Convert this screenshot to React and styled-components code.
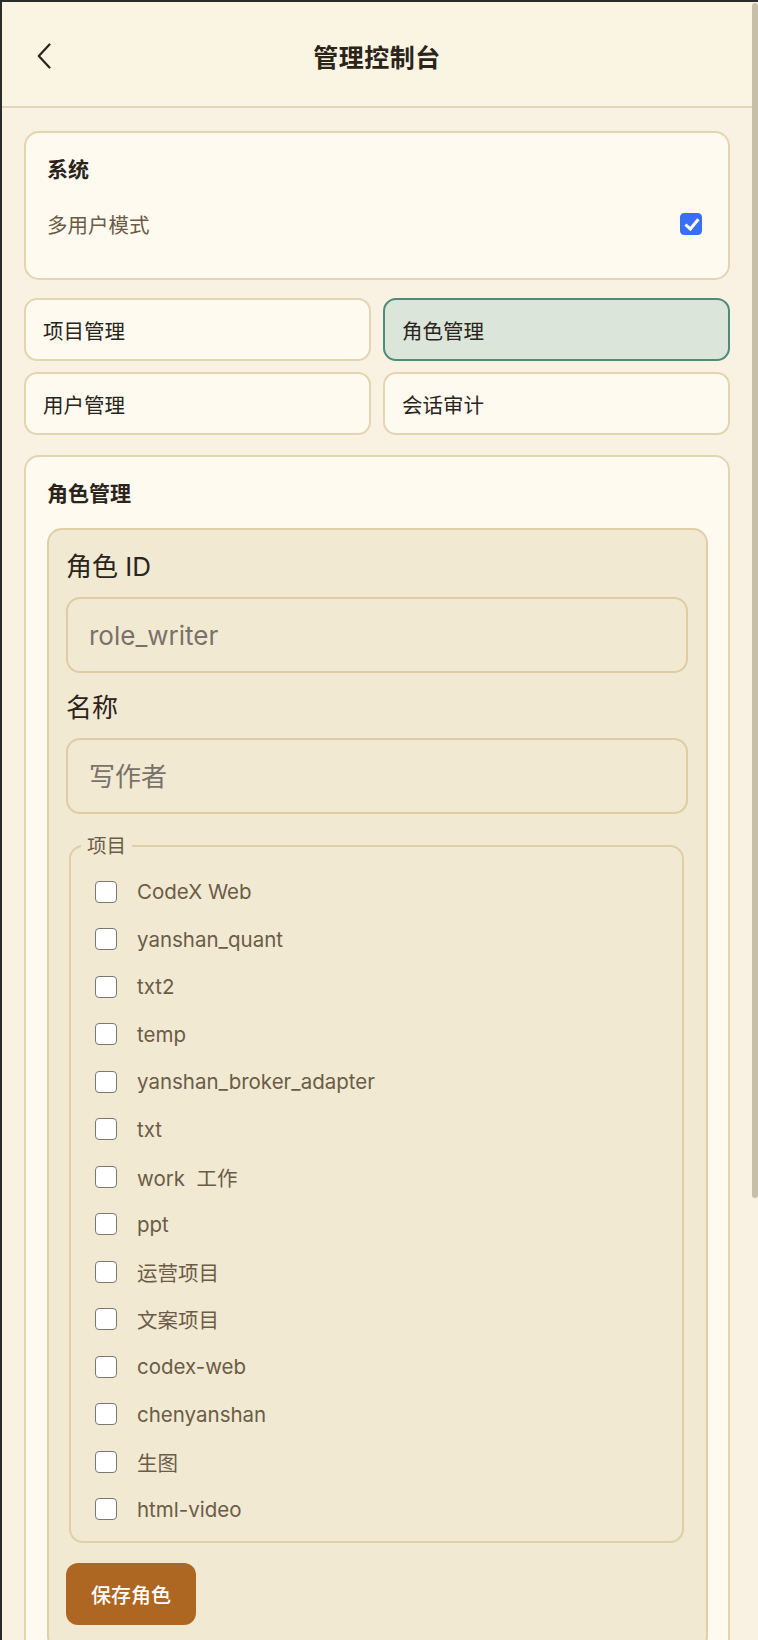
import React, { useState } from "react";
import styled, { createGlobalStyle } from "styled-components";

const projects = [
  "CodeX Web",
  "yanshan_quant",
  "txt2",
  "temp",
  "yanshan_broker_adapter",
  "txt",
  "work  工作",
  "ppt",
  "运营项目",
  "文案项目",
  "codex-web",
  "chenyanshan",
  "生图",
  "html-video",
];

const tabs = ["项目管理", "角色管理", "用户管理", "会话审计"];

const App = () => {
  const [multiUser, setMultiUser] = useState(true);
  const [active, setActive] = useState("角色管理");
  const [picked, setPicked] = useState({});

  const toggle = (name) => setPicked((p) => ({ ...p, [name]: !p[name] }));

  return (
    <Shell>
      <GlobalStyle />
      <Header>
        <Back aria-label="back">
          <svg width="14" height="26" viewBox="0 0 14 26" fill="none">
            <path
              d="M12.5 1.5 L1.8 13 L12.5 24.5"
              stroke="#2a241b"
              strokeWidth="2.2"
              strokeLinecap="round"
              strokeLinejoin="round"
            />
          </svg>
        </Back>
        <Title>管理控制台</Title>
      </Header>

      <Main>
        <Card>
          <CardTitle>系统</CardTitle>
          <SwitchRow>
            <span>多用户模式</span>
            <Check
              type="checkbox"
              $blue
              checked={multiUser}
              onChange={() => setMultiUser(!multiUser)}
            />
          </SwitchRow>
        </Card>

        <TabGrid>
          {tabs.map((t) => (
            <Tab key={t} $active={active === t} onClick={() => setActive(t)}>
              {t}
            </Tab>
          ))}
        </TabGrid>

        <Card $tall>
          <CardTitle>角色管理</CardTitle>
          <Panel>
            <Label>角色 ID</Label>
            <Input placeholder="role_writer" />
            <Label>名称</Label>
            <Input placeholder="写作者" />

            <Fieldset>
              <Legend>项目</Legend>
              {projects.map((p) => (
                <Item key={p}>
                  <Check
                    type="checkbox"
                    checked={!!picked[p]}
                    onChange={() => toggle(p)}
                  />
                  <ItemText>{p}</ItemText>
                </Item>
              ))}
            </Fieldset>

            <SaveButton>保存角色</SaveButton>
          </Panel>
        </Card>
      </Main>

      <ScrollThumb />
    </Shell>
  );
};

export default App;

const GlobalStyle = createGlobalStyle`
  * { box-sizing: border-box; }
  html, body {
    margin: 0;
    background: #f9f2e2;
  }
  body {
    font-family: Inter, "Noto Sans CJK SC", sans-serif;
    color: #2a241b;
    overflow: hidden;
  }
`;

const Shell = styled.div`
  min-height: 100vh;
  border-top: 2px solid #2c2b29;
  border-left: 2px solid #2c2b29;
  padding-right: 6px;
  background: #f9f2e2;
`;

const Header = styled.header`
  height: 106px;
  padding-top: 4px;
  display: flex;
  align-items: center;
  justify-content: center;
  position: relative;
  background: #faf4e3;
  border-bottom: 2px solid #e4d6b5;
`;

const Back = styled.button`
  position: absolute;
  left: 35px;
  top: 41px;
  border: none;
  background: none;
  padding: 0;
  display: flex;
  cursor: pointer;
`;

const Title = styled.h1`
  margin: 0;
  font-size: 25px;
  font-weight: 700;
  letter-spacing: 0.5px;
  color: #2a241b;
`;

const Main = styled.main`
  padding: 23px 22px 0;
  display: flex;
  flex-direction: column;
`;

const Card = styled.section`
  background: #fefaef;
  border: 2px solid #e4d5b1;
  border-radius: 15px;
  padding: ${(p) => (p.$tall ? "22px 20px 22px 21px" : "22px 26px 39px 21px")};
`;

const CardTitle = styled.h2`
  margin: 0;
  font-size: 21px;
  line-height: 30px;
  font-weight: 700;
  color: #2a241b;
`;

const SwitchRow = styled.label`
  margin-top: 24px;
  height: 30px;
  display: flex;
  align-items: center;
  justify-content: space-between;
  font-size: 20.5px;
  color: #6b5c47;
`;

const TabGrid = styled.div`
  margin: 18px 0 20px;
  display: grid;
  grid-template-columns: 1fr 1fr;
  column-gap: 12px;
  row-gap: 11px;
`;

const Tab = styled.button`
  height: 63px;
  padding: 0 17px;
  text-align: left;
  font-family: inherit;
  font-size: 20.5px;
  color: #2a241b;
  background: ${(p) => (p.$active ? "#dbe5da" : "#fefaef")};
  border: 2px solid ${(p) => (p.$active ? "#4f8a7b" : "#e4d5b1")};
  border-radius: 13px;
  cursor: pointer;
`;

const Panel = styled.div`
  margin-top: 19px;
  background: #f2e9d3;
  border: 2px solid #e0cea7;
  border-radius: 15px;
  padding: 19px 18px 24px 17px;
  display: flex;
  flex-direction: column;
  align-items: flex-start;
`;

const Label = styled.div`
  font-size: 26px;
  line-height: 36px;
  color: #2a241b;
  margin-bottom: 12px;
`;

const Input = styled.input`
  width: 100%;
  height: 76px;
  margin-bottom: 17px;
  padding: 0 21px;
  font-family: inherit;
  font-size: 26px;
  color: #2a241b;
  background: #f2e9d3;
  border: 2px solid #dfcca4;
  border-radius: 14px;
  outline: none;

  &::placeholder {
    color: #78726a;
  }
`;

const Fieldset = styled.fieldset`
  align-self: stretch;
  margin: 1px 4px 0 3px;
  padding: 8px 0 8px 24px;
  border: 2px solid #e0cea7;
  border-radius: 14px;
`;

const Legend = styled.legend`
  margin-left: -14px;
  padding: 0 6px;
  font-size: 19.5px;
  line-height: 28px;
  color: #6b5c47;
`;

const Item = styled.label`
  height: 47.5px;
  display: flex;
  align-items: center;
  gap: 20px;
  cursor: pointer;
`;

const ItemText = styled.span`
  white-space: pre;
  font-size: 20.5px;
  color: #6b5c47;
`;

const Check = styled.input`
  appearance: none;
  margin: 0;
  width: 22px;
  height: 22px;
  flex: none;
  border-radius: 4px;
  border: 1.5px solid #7b7873;
  background: #ffffff;
  position: relative;
  cursor: pointer;

  &:checked {
    background: ${(p) => (p.$blue ? "#3a6ef6" : "#6b5c47")};
    border-color: ${(p) => (p.$blue ? "#3a6ef6" : "#6b5c47")};
  }

  &:checked::after {
    content: "";
    position: absolute;
    left: 6.5px;
    top: 2px;
    width: 5px;
    height: 11px;
    border: solid #ffffff;
    border-width: 0 3px 3px 0;
    transform: rotate(40deg);
  }
`;

const SaveButton = styled.button`
  margin-top: 20px;
  height: 62px;
  width: 130px;
  font-family: inherit;
  font-size: 20px;
  font-weight: 500;
  color: #ffffff;
  background: #ae6722;
  border: none;
  border-radius: 12px;
  cursor: pointer;
`;

const ScrollThumb = styled.div`
  position: fixed;
  right: 0;
  top: 3px;
  width: 6px;
  height: 1195px;
  border-radius: 3px;
  background: #c8bfa9;
`;
